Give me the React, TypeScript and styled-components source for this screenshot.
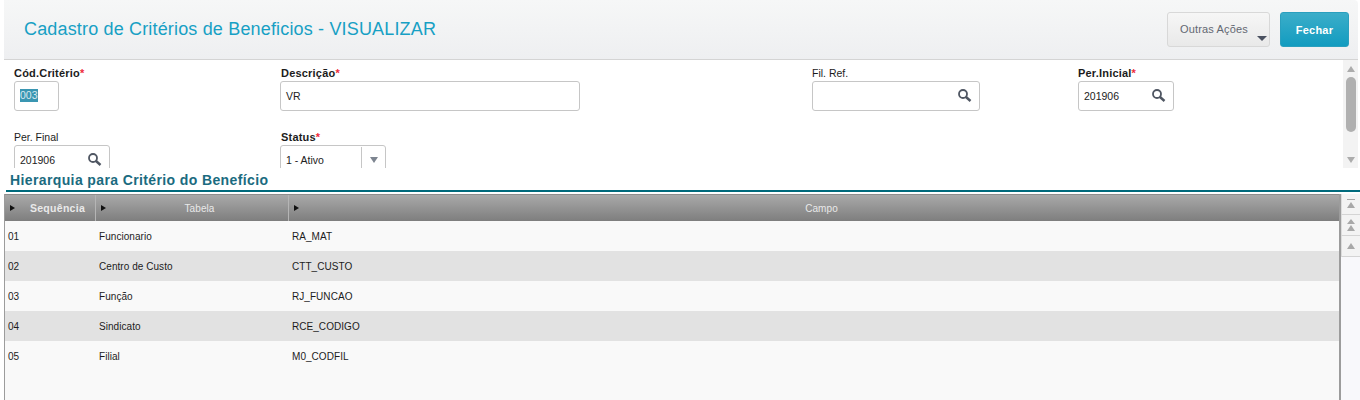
import React from "react";
import styled, { createGlobalStyle } from "styled-components";

const Global = createGlobalStyle`
  html, body { margin: 0; padding: 0; background: #fff; }
  body { font-family: "Liberation Sans", Arial, sans-serif; overflow: hidden; }
`;

const Page = styled.div`
  width: 1360px;
  height: 400px;
  overflow: hidden;
  display: flex;
  flex-direction: column;
  background: #fff;
`;

const Header = styled.header`
  height: 59px;
  margin: 0 2px 0 4px;
  flex: none;
  display: flex;
  align-items: center;
  justify-content: space-between;
  padding: 0 9px 0 20px;
  background: linear-gradient(#f6f7f7, #eeeff1);
  border-bottom: 1px solid #d4d4d4;
  border-top-right-radius: 4px;
`;

const Title = styled.h1`
  margin: 0 0 1px;
  font-size: 18px;
  font-weight: 400;
  letter-spacing: 0.165px;
  color: #17a0c4;
`;

const Actions = styled.div`
  display: flex;
  gap: 10px;
`;

const OtherButton = styled.button`
  position: relative;
  width: 103px;
  height: 35px;
  padding: 0 0 1px 12px;
  text-align: left;
  font: 11px "Liberation Sans", Arial, sans-serif;
  letter-spacing: 0.15px;
  color: #636872;
  background: linear-gradient(#f6f6f6, #e9e9e9);
  border: 1px solid #d8d8d8;
  border-radius: 3px;
`;

const Caret = styled.span`
  position: absolute;
  right: 2px;
  bottom: 5px;
  border-style: solid;
  border-width: 5px 5px 0;
  border-color: #4a5160 transparent transparent;
`;

const CloseButton = styled.button`
  width: 69px;
  height: 35px;
  font: bold 11px "Liberation Sans", Arial, sans-serif;
  letter-spacing: 0.2px;
  color: #fff;
  background: linear-gradient(#3badc9, #129cc0);
  border: 1px solid #2a9fbe;
  border-radius: 3px;
`;

const FormArea = styled.section`
  height: 108px;
  flex: none;
  margin: 0 2px 0 4px;
  display: flex;
  overflow: hidden;
`;

const FormGrid = styled.div`
  flex: 1;
  display: grid;
  grid-template-columns: 266px 532px 266px 1fr;
  grid-auto-rows: 64px;
  padding: 7px 0 0 10px;
`;

const Field = styled.div`
  display: flex;
  flex-direction: column;
  align-items: flex-start;
`;

const Label = styled.label<{ $strong?: boolean; $inset?: boolean }>`
  height: 14px;
  line-height: 13px;
  padding-left: ${(p) => (p.$inset ? 1 : 0)}px;
  font-size: ${(p) => (p.$strong ? 11 : 10.5)}px;
  font-weight: ${(p) => (p.$strong ? 700 : 400)};
  letter-spacing: ${(p) => (p.$strong ? 0.2 : 0)}px;
  color: #1c1c1c;
  white-space: nowrap;
`;

const Required = styled.span`
  color: #ee2a3a;
`;

const InputBox = styled.div<{ $w: number }>`
  box-sizing: border-box;
  width: ${(p) => p.$w}px;
  height: 30px;
  display: flex;
  align-items: center;
  padding: 0 7px 1px 5px;
  justify-content: space-between;
  background: #fff;
  border: 1px solid #c6c6c6;
  border-radius: 3px;
  font-size: 10.5px;
  color: #222;
`;

const Selected = styled.span`
  background: #3a96b2;
  color: #d8e9ee;
  line-height: 13px;
`;

const SelectBox = styled(InputBox)`
  padding-right: 0;
`;

const SelectButton = styled.span`
  width: 23px;
  height: 26px;
  display: flex;
  align-items: center;
  justify-content: center;
  border-left: 1px solid #c6c6c6;
`;

const SelectCaret = styled.span`
  border-style: solid;
  border-width: 6px 4px 0;
  border-color: #7d8590 transparent transparent;
`;

const ScrollTrack = styled.aside`
  width: 15px;
  flex: none;
  background: #f3f3f3;
  display: flex;
  flex-direction: column;
  align-items: center;
  justify-content: space-between;
  padding: 6px 0 5px;
  box-sizing: border-box;
`;

const ScrollUp = styled.span`
  border-style: solid;
  border-width: 0 4px 6px;
  border-color: transparent transparent #acacac;
`;

const ScrollDown = styled.span`
  border-style: solid;
  border-width: 6px 4px 0;
  border-color: #acacac transparent transparent;
`;

const ScrollThumb = styled.span`
  width: 10px;
  height: 55px;
  margin-top: 5px;
  margin-bottom: auto;
  border-radius: 5px;
  background: #b0b0b0;
`;

const Section = styled.section`
  flex: 1;
  min-height: 0;
  display: flex;
  flex-direction: column;
`;

const SectionTitle = styled.h2`
  margin: 4px 0 0 6px;
  padding: 0 0 2px 4px;
  height: 16px;
  line-height: 16px;
  flex: none;
  font-size: 14px;
  font-weight: 700;
  letter-spacing: 0.38px;
  color: #1b6b80;
  border-bottom: 2px solid #006a7c;
`;

const GridWrap = styled.div`
  flex: 1;
  min-height: 0;
  margin: 2px 0 0 4px;
  display: flex;
`;

const Table = styled.div`
  width: 1337px;
  flex: none;
  box-sizing: border-box;
  background: #f9f9f9;
  border-left: 1px solid #9c9c9c;
  border-right: 2px solid #9c9c9c;
`;

const HeadRow = styled.div`
  display: grid;
  grid-template-columns: 91px 193px 1fr;
  height: 27px;
  box-sizing: border-box;
  border-top: 1px solid #8e8e8e;
  background: linear-gradient(#a9a9a9, #7e7e7e);
`;

const HeadCell = styled.div<{ $bold?: boolean }>`
  position: relative;
  display: flex;
  align-items: center;
  justify-content: center;
  padding-left: ${(p) => (p.$bold ? 15 : 15)}px;
  font-size: ${(p) => (p.$bold ? 10.5 : 10)}px;
  font-weight: ${(p) => (p.$bold ? 700 : 400)};
  letter-spacing: ${(p) => (p.$bold ? 0.3 : 0.1)}px;
  color: #e9e9e9;
  border-right: 1px solid #b5b5b5;
  box-sizing: border-box;
  &:last-child { border-right: 0; }
`;

const SortMark = styled.span`
  position: absolute;
  left: 5px;
  top: 10px;
  border-style: solid;
  border-width: 3.5px 0 3.5px 5px;
  border-color: transparent transparent transparent #111;
`;

const Row = styled.div<{ $alt: boolean }>`
  display: grid;
  grid-template-columns: 91px 193px 1fr;
  height: 30px;
  align-items: center;
  background: ${(p) => (p.$alt ? "#e2e2e2" : "#f9f9f9")};
  font-size: 10px;
  color: #1c1c1c;
`;

const Cell = styled.div`
  padding-left: 3px;
  letter-spacing: 0.05px;
`;

const SidePanel = styled.aside`
  flex: 1;
  background: #f8f8fb;
  display: flex;
  flex-direction: column;
`;

const SideButton = styled.div`
  height: 20px;
  flex: none;
  display: flex;
  align-items: center;
  justify-content: center;
  background: #f3f3f3;
  border-bottom: 1px solid #d4d4d4;
  border-left: 1px solid #dcdcdc;
`;

const Svg = styled.svg`
  display: block;
`;

const Search = () => (
  <Svg width="15" height="15" viewBox="0 0 15 15" fill="none" stroke="#4f5662">
    <circle cx="6" cy="6" r="4" strokeWidth="1.8" />
    <path d="M9 9l4.5 4" strokeWidth="2.4" />
  </Svg>
);

const First = () => (
  <Svg width="10" height="11" viewBox="0 0 10 11" fill="#a8a8a8">
    <rect x="1" y="0" width="8" height="1" />
    <path d="M5 3l4 6H1z" />
  </Svg>
);
const Double = () => (
  <Svg width="10" height="12" viewBox="0 0 10 12" fill="#a8a8a8">
    <path d="M5 0l4 5H1zM5 6l4 6H1z" />
  </Svg>
);
const Single = () => (
  <Svg width="10" height="7" viewBox="0 0 10 7" fill="#a8a8a8">
    <path d="M5 0l4 6H1z" />
  </Svg>
);

const rows = [
  ["01", "Funcionario", "RA_MAT"],
  ["02", "Centro de Custo", "CTT_CUSTO"],
  ["03", "Função", "RJ_FUNCAO"],
  ["04", "Sindicato", "RCE_CODIGO"],
  ["05", "Filial", "M0_CODFIL"],
];

export default function App() {
  return (
    <Page>
      <Global />
      <Header>
        <Title>Cadastro de Critérios de Beneficios - VISUALIZAR</Title>
        <Actions>
          <OtherButton>
            Outras Ações
            <Caret />
          </OtherButton>
          <CloseButton>Fechar</CloseButton>
        </Actions>
      </Header>
      <FormArea>
        <FormGrid>
          <Field>
            <Label $strong>Cód.Critério<Required>*</Required></Label>
            <InputBox $w={45}><Selected>003</Selected></InputBox>
          </Field>
          <Field>
            <Label $strong $inset>Descrição<Required>*</Required></Label>
            <InputBox $w={300}>VR</InputBox>
          </Field>
          <Field>
            <Label>Fil. Ref.</Label>
            <InputBox $w={168}><span /><Search /></InputBox>
          </Field>
          <Field>
            <Label $strong>Per.Inicial<Required>*</Required></Label>
            <InputBox $w={96}>201906<Search /></InputBox>
          </Field>
          <Field>
            <Label>Per. Final</Label>
            <InputBox $w={96}>201906<Search /></InputBox>
          </Field>
          <Field>
            <Label $strong $inset>Status<Required>*</Required></Label>
            <SelectBox $w={106}>
              1 - Ativo
              <SelectButton><SelectCaret /></SelectButton>
            </SelectBox>
          </Field>
        </FormGrid>
        <ScrollTrack>
          <ScrollUp />
          <ScrollThumb />
          <ScrollDown />
        </ScrollTrack>
      </FormArea>
      <Section>
        <SectionTitle>Hierarquia para Critério do Benefício</SectionTitle>
        <GridWrap>
          <Table>
            <HeadRow>
              <HeadCell $bold><SortMark />Sequência</HeadCell>
              <HeadCell><SortMark />Tabela</HeadCell>
              <HeadCell><SortMark />Campo</HeadCell>
            </HeadRow>
            {rows.map((r, i) => (
              <Row key={r[0]} $alt={i % 2 === 1}>
                {r.map((c) => (
                  <Cell key={c}>{c}</Cell>
                ))}
              </Row>
            ))}
          </Table>
          <SidePanel>
            <SideButton><First /></SideButton>
            <SideButton><Double /></SideButton>
            <SideButton><Single /></SideButton>
          </SidePanel>
        </GridWrap>
      </Section>
    </Page>
  );
}
